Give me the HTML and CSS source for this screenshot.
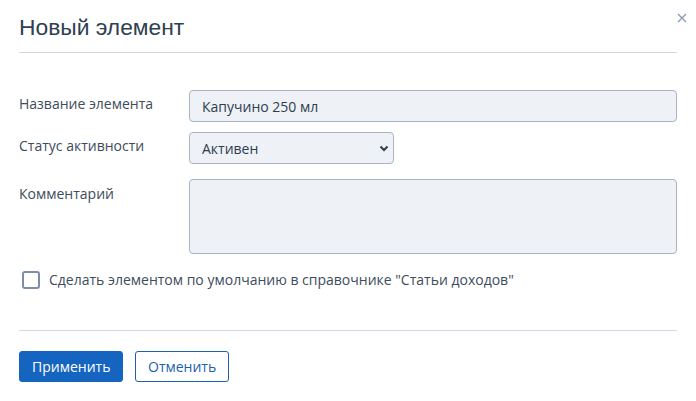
FILE: index.html
```html
<!DOCTYPE html>
<html lang="ru">
<head>
<meta charset="utf-8">
<title>Новый элемент</title>
<link rel="stylesheet" href="styles.css">
</head>
<body>
<div class="modal">
  <div class="modal-header">
    <h1 class="modal-title">Новый элемент</h1>
    <button class="close" type="button" aria-label="Закрыть">
      <svg width="10" height="10" viewBox="0 0 10 10"><path d="M1 1L9 9M9 1L1 9" stroke="#8a9bb3" stroke-width="1.4" fill="none"/></svg>
    </button>
  </div>
  <div class="modal-body">
    <div class="form-row">
      <label class="label">Название элемента</label>
      <input class="input input-wide" type="text" value="Капучино 250 мл">
    </div>
    <div class="form-row row-select">
      <label class="label">Статус активности</label>
      <div class="select-wrap">
        <select class="input select">
          <option>Активен</option>
        </select>
        <svg class="chevron" width="10" height="7" viewBox="0 0 10 7"><path d="M1.5 1.5L5 5L8.5 1.5" stroke="#2d3e50" stroke-width="2" fill="none"/></svg>
      </div>
    </div>
    <div class="form-row row-text">
      <label class="label label-text">Комментарий</label>
      <textarea class="input textarea"></textarea>
    </div>
    <label class="check-row">
      <span class="checkbox"></span>
      <span class="check-text">Сделать элементом по умолчанию в справочнике "Статьи доходов"</span>
    </label>
  </div>
  <div class="modal-footer">
    <button class="btn btn-primary" type="button">Применить</button>
    <button class="btn btn-outline" type="button">Отменить</button>
  </div>
</div>
</body>
</html>
```

FILE: styles.css
```css
* { box-sizing: border-box; }
html, body { margin: 0; padding: 0; background: #fff; }
body {
  font-family: "Open Sans", "Liberation Sans", sans-serif;
  font-size: 14px;
  color: #3a4a5c;
  width: 696px;
  height: 401px;
  overflow: hidden;
}
.modal { padding: 0 19px; position: relative; }
.modal-header {
  border-bottom: 1px solid #cfd8e3;
  padding-top: 12px;
  height: 53px;
}
.modal-title {
  margin: 0;
  font-family: "Liberation Sans", Arial, sans-serif;
  font-weight: 400;
  font-size: 22.8px;
  line-height: 30px;
  color: #2f4053;
}
.close {
  position: absolute;
  top: 10px;
  right: 6px;
  width: 16px;
  height: 16px;
  padding: 0;
  border: 0;
  background: none;
  display: flex;
  align-items: center;
  justify-content: center;
}
.modal-body { padding-top: 37px; }
.form-row {
  display: flex;
  align-items: flex-start;
  margin-bottom: 10px;
}
.row-select { margin-bottom: 15px; }
.row-text { margin-bottom: 16px; }
.label {
  width: 170px;
  flex: none;
  padding-top: 4px;
  line-height: 20px;
  color: #3d4c5d;
}
.label-text { padding-top: 5px; }
.input {
  font-family: "Open Sans", "Liberation Sans", sans-serif;
  font-size: 14px;
  color: #2d3e50;
  background: #eef1f5;
  border: 1px solid #a7b4c5;
  border-radius: 4px;
  height: 32px;
  padding: 0 12px;
  margin: 0;
  outline: none;
  display: block;
}
.input-wide { width: 488px; }
.select-wrap { position: relative; width: 205px; height: 32px; }
.select {
  width: 205px;
  appearance: none;
  -webkit-appearance: none;
}
.chevron { position: absolute; right: 5px; top: 13px; pointer-events: none; }
.textarea {
  width: 488px;
  height: 75px;
  resize: none;
}
.check-row {
  display: flex;
  align-items: center;
  padding-left: 3px;
  height: 20px;
}
.checkbox {
  width: 18px;
  height: 18px;
  border: 2px solid #7d8fa8;
  border-radius: 3px;
  flex: none;
  margin-right: 9px;
}
.check-text { color: #3d4c5d; line-height: 20px; }
.modal-footer {
  margin-top: 40px;
  border-top: 1px solid #cfd8e3;
  padding-top: 20px;
  display: flex;
  gap: 12px;
}
.btn {
  font-family: "Open Sans", "Liberation Sans", sans-serif;
  font-size: 14px;
  height: 31px;
  border-radius: 3px;
  padding: 0 12px;
  cursor: pointer;
}
.btn-primary {
  background: #1565c0;
  border: 1px solid #1565c0;
  color: #fff;
  width: 104px;
}
.btn-outline {
  background: #fff;
  border: 1px solid #1b5fb0;
  color: #1b5fb0;
  width: 94px;
}
```
